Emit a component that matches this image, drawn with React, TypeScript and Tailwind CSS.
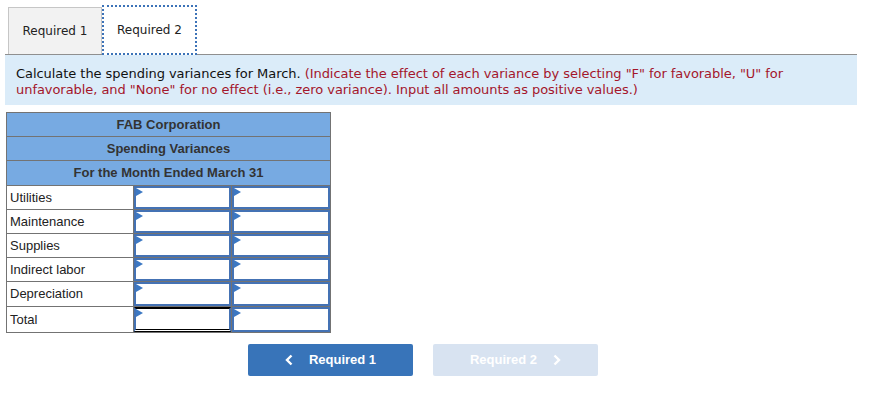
import React from "react";

const Flag = () => (
  <svg width="7" height="8" viewBox="0 0 7 8" className="absolute left-0 top-0">
    <polygon points="0,0 7,4 0,8" fill="#3c78c3" />
  </svg>
);

const InputCell = ({ top, bottom, h }: { top?: boolean; bottom?: boolean; h: string }) => (
  <td className={"border border-[#737373] p-0 " + h}>
    <div
      className={
        "relative h-full border-2 border-[#4472b4] bg-white " +
        (top ? "border-t-black " : "") +
        (bottom ? "border-b-[3px] border-b-black border-double " : "")
      }
    >
      <Flag />
    </div>
  </td>
);

export default function App() {
  const rows = ["Utilities", "Maintenance", "Supplies", "Indirect labor", "Depreciation", "Total"];
  const heights = ["h-[24px]", "h-[24px]", "h-[24px]", "h-[24px]", "h-[25px]", "h-[26px]"];
  return (
    <div className="w-[886px] h-[419px] bg-white relative" style={{ fontFamily: '"DejaVu Sans", Verdana, sans-serif' }}>
      <div className="ml-[5px] w-[852px]">
        <div className="flex items-end pl-[3px] border-b border-[#8f8f8f] h-[55px]">
          <div className="w-[94px] h-[47px] bg-[#f2f2f2] border border-b-0 border-[#c6c6c6] flex items-center justify-center text-[12px] text-[#222]">
            Required 1
          </div>
          <div className="w-[95px] h-[50px] -mb-px bg-white border-2 border-dotted border-[#3c73b8] flex items-center justify-center text-[12px] text-[#222] relative z-10">
            Required 2
          </div>
        </div>
        <div className="bg-[#dbecf9] px-[11px] pt-[11px] pb-[7px] text-[13px] leading-[16px] text-[#111] tracking-[-0.05px]">
          Calculate the spending variances for March.{" "}
          <span className="text-[#a4162b]">
            (Indicate the effect of each variance by selecting "F" for favorable, "U" for unfavorable, and "None" for no effect (i.e., zero variance). Input all amounts as positive values.)
          </span>
        </div>
        <table
          className="mt-[7px] ml-[1px] border-collapse text-[13px] text-[#222]"
          style={{ fontFamily: '"Liberation Sans", Arial, sans-serif' }}
        >
          <colgroup>
            <col className="w-[127px]" />
            <col className="w-[98px]" />
            <col className="w-[99px]" />
          </colgroup>
          <tbody>
            {["FAB Corporation", "Spending Variances", "For the Month Ended March 31"].map((t, i) => (
              <tr key={t}>
                <td
                  colSpan={3}
                  className={
                    "bg-[#77aae2] border border-[#737373] text-center font-bold text-[#333] p-0 " +
                    (i === 2 ? "h-[25px]" : "h-[24px]")
                  }
                >
                  {t}
                </td>
              </tr>
            ))}
            {rows.map((r, i) => (
              <tr key={r}>
                <td className={"border border-[#737373] pl-[3px] py-0 text-[#222] " + heights[i]}>{r}</td>
                <InputCell h={heights[i]} bottom={i === 5} top={i === 5} />
                <InputCell h={heights[i]} />
              </tr>
            ))}
          </tbody>
        </table>
        <div className="flex mt-[11px] ml-[243px] gap-[20px]" style={{ fontFamily: '"Liberation Sans", Arial, sans-serif' }}>
          <div className="w-[165px] h-[32px] rounded-[2px] bg-[#3874b9] flex items-center justify-center text-white font-bold text-[13px]">
            <svg width="9" height="12" viewBox="0 0 9 12" className="mr-[15px]">
              <path d="M6.5 1.5 L2 6 L6.5 10.5" stroke="white" strokeWidth="2.4" fill="none" />
            </svg>
            Required 1
          </div>
          <div className="w-[165px] h-[32px] rounded-[2px] bg-[#d8e3f1] flex items-center justify-center text-white font-bold text-[13px]">
            Required 2
            <svg width="9" height="12" viewBox="0 0 9 12" className="ml-[15px]">
              <path d="M2.5 1.5 L7 6 L2.5 10.5" stroke="white" strokeWidth="2.4" fill="none" />
            </svg>
          </div>
        </div>
      </div>
    </div>
  );
}
